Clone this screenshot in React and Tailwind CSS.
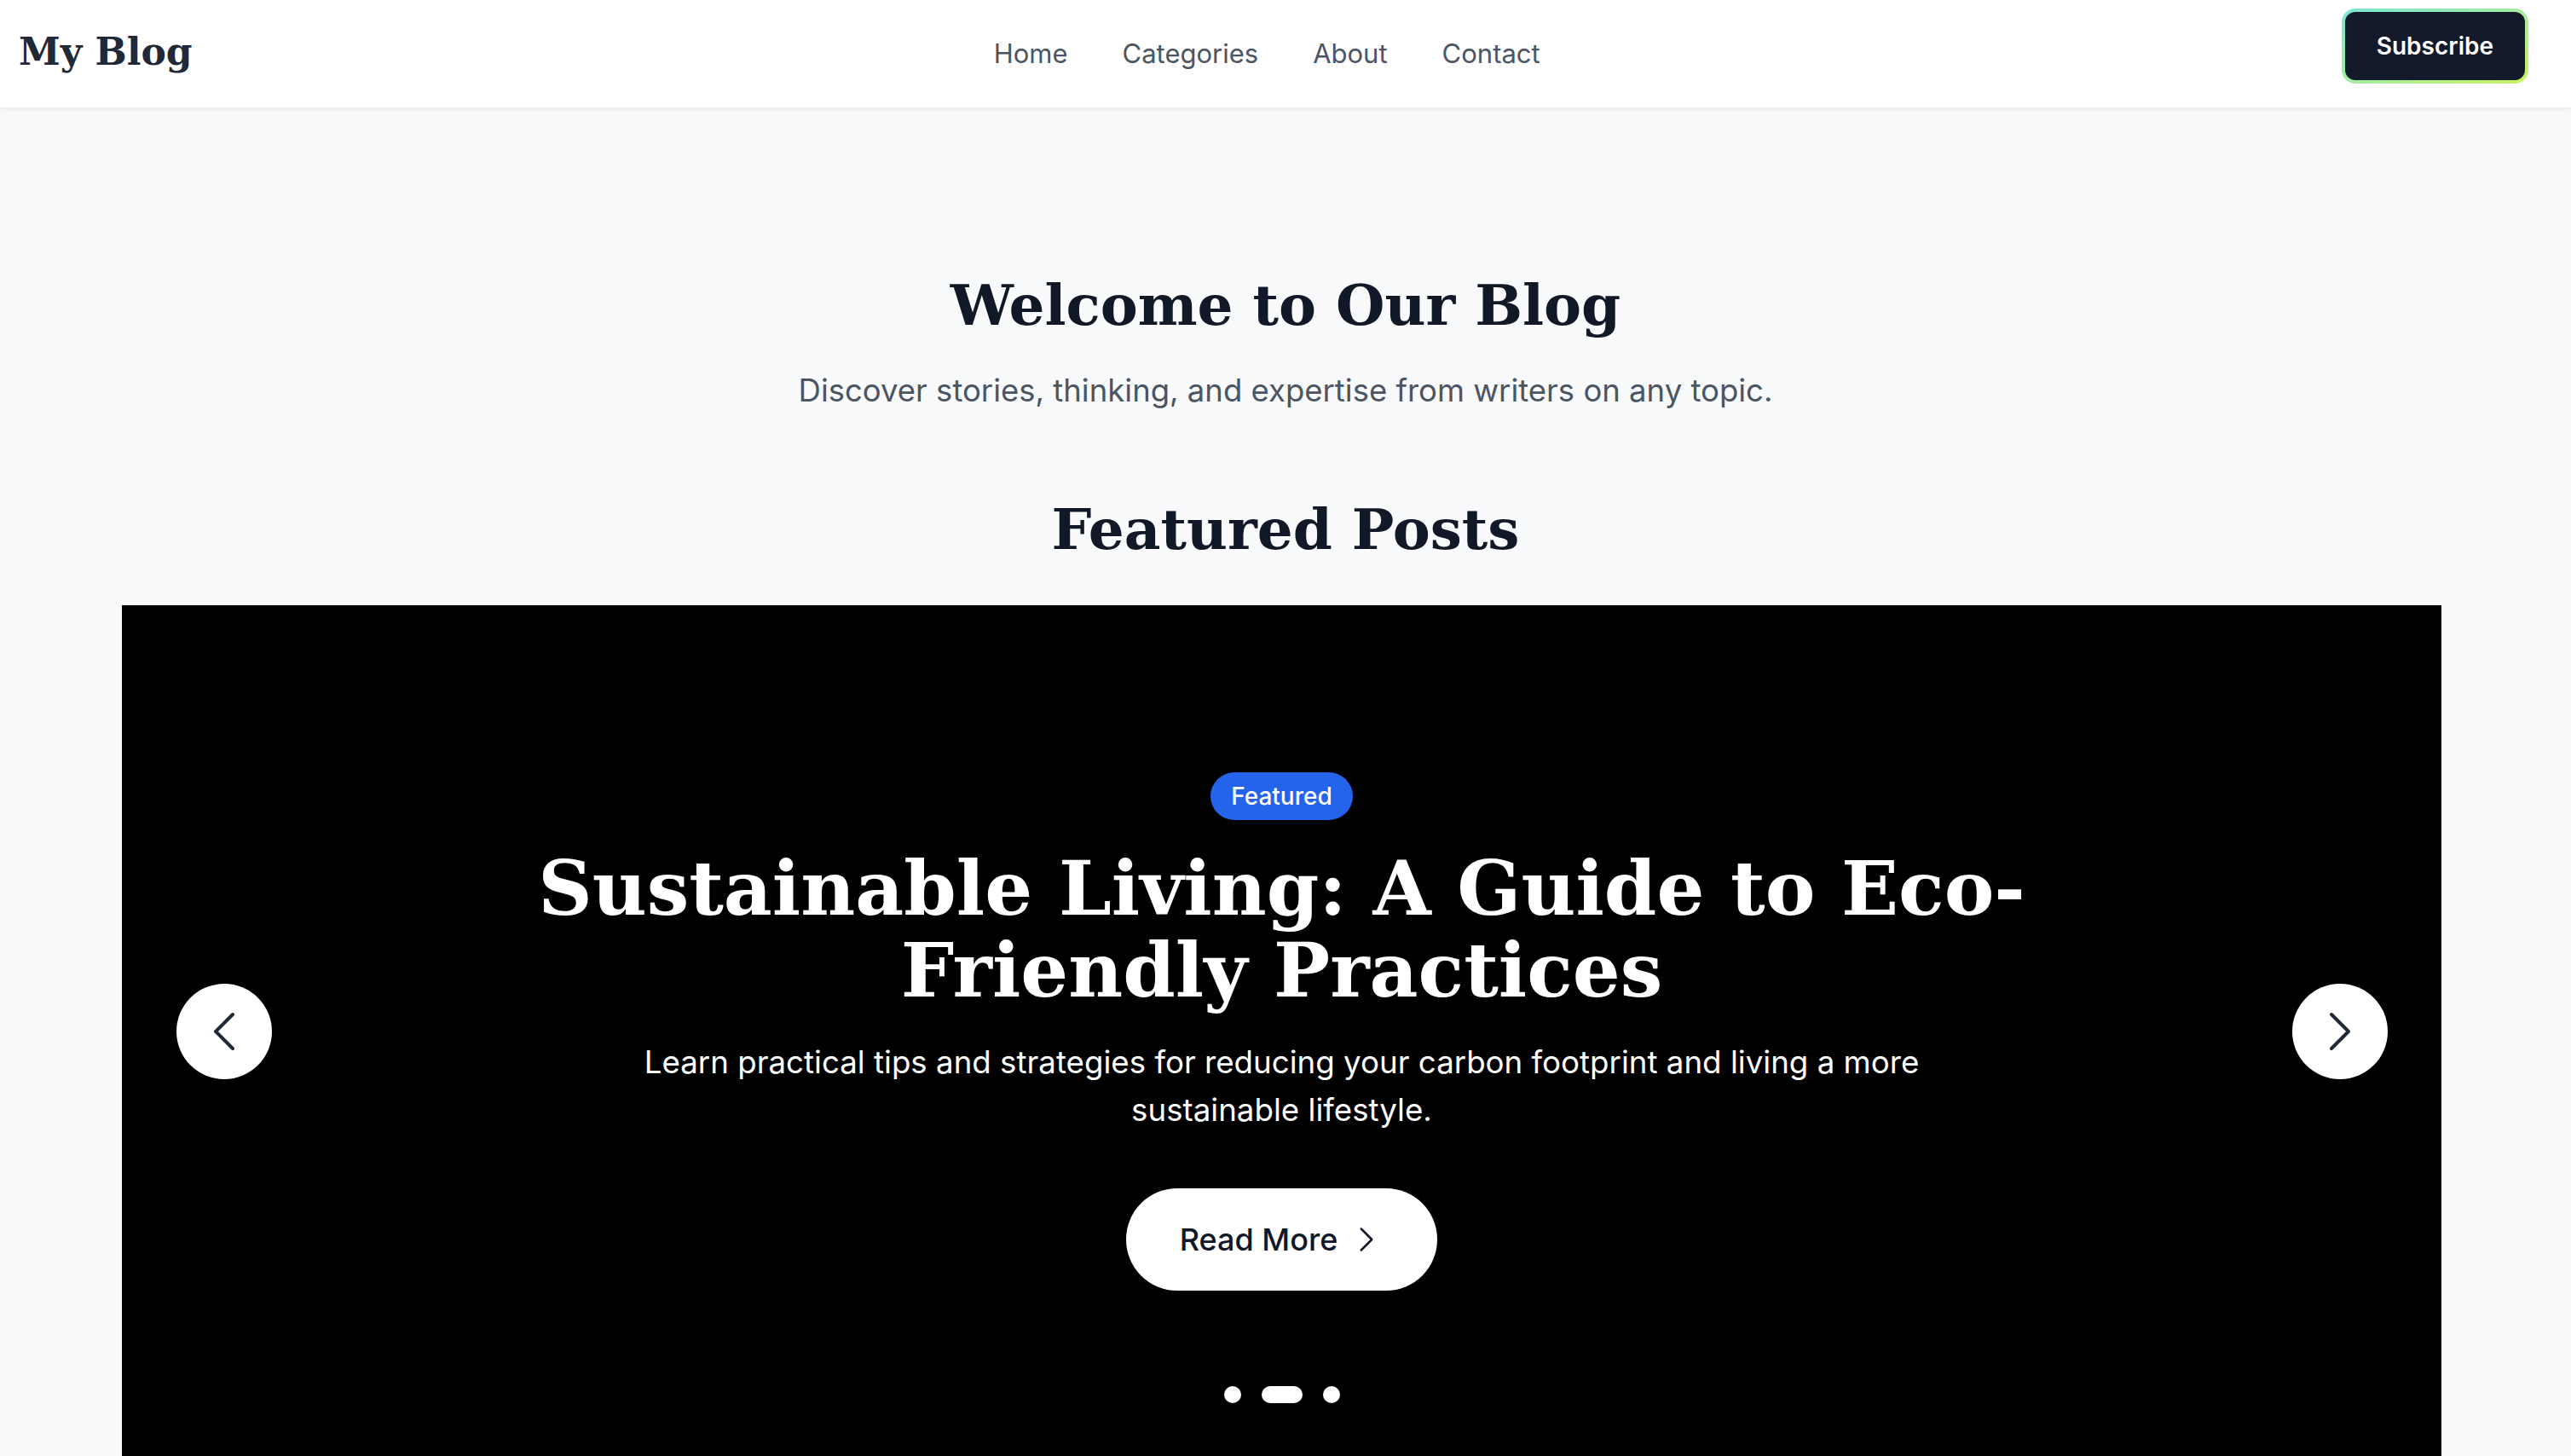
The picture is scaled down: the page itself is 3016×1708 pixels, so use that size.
import React from "react";

const ChevronLeft = ({ className }) => (
    <svg viewBox="0 0 24 24" fill="none" stroke="currentColor" strokeWidth="1.5" className={className}>
        <path strokeLinecap="round" strokeLinejoin="round" d="M15.75 19.5 8.25 12l7.5-7.5" />
    </svg>
);

const ChevronRight = ({ className }) => (
    <svg viewBox="0 0 24 24" fill="none" stroke="currentColor" strokeWidth="1.5" className={className}>
        <path strokeLinecap="round" strokeLinejoin="round" d="m8.25 4.5 7.5 7.5-7.5 7.5" />
    </svg>
);

const links = ["Home", "Categories", "About", "Contact"];

export default function App() {
    return (
        <div className="min-h-screen bg-[#f9fafb] font-['Inter',sans-serif]">
            {/* Header */}
            <header className="relative z-10 h-[126px] bg-white shadow-[0_2px_6px_rgba(0,0,0,0.08)] flex items-center justify-between pl-[22px] pr-[50px]">
                <div className="font-['DejaVu_Serif',serif] text-[44px] font-bold text-[#1f2937] mt-[-4px]">
                    My Blog
                </div>

                <nav className="flex items-center gap-[64px] text-[31px] text-[#4b5563]">
                    {links.map((link) => (
                        <a key={link} href="#">
                            {link}
                        </a>
                    ))}
                </nav>

                <button className="self-start mt-[10px] rounded-[16px] p-[4px] bg-linear-to-br from-[#7ce6d2] to-[#c6f25a]">
                    <span className="flex items-center h-[80px] px-[37px] rounded-[12px] bg-[#131a2b] text-white text-[28px] font-semibold">
                        Subscribe
                    </span>
                </button>
            </header>

            {/* Hero */}
            <section className="pt-[192px] text-center">
                <h1 className="font-['DejaVu_Serif',serif] text-[66px] leading-[80px] font-bold text-[#111827] mb-[32px]">
                    Welcome to Our Blog
                </h1>
                <p className="text-[36.5px] leading-[56px] text-[#4b5563]">
                    Discover stories, thinking, and expertise from writers on any topic.
                </p>
            </section>

            {/* Featured */}
            <section className="mt-[95px]">
                <h2 className="font-['DejaVu_Serif',serif] text-[66px] leading-[80px] font-bold text-[#111827] text-center mb-[49px]">
                    Featured Posts
                </h2>

                <div className="relative ml-[143px] mr-[152px] h-[1000px] bg-black flex items-center justify-center">
                    <div className="flex flex-col items-center text-center">
                        <span className="rounded-full bg-[#2563eb] px-[24px] py-[8px] text-[28px] leading-[40px] font-medium text-white mb-[32px]">
                            Featured
                        </span>
                        <h3 className="max-w-[1792px] font-['DejaVu_Serif',serif] text-[88px] leading-[96px] font-bold text-white mb-[32px]">
                            Sustainable Living: A Guide to Eco-Friendly Practices
                        </h3>
                        <p className="max-w-[1536px] text-[36.7px] leading-[56px] text-white mb-[64px]">
                            Learn practical tips and strategies for reducing your carbon footprint and living a more sustainable lifestyle.
                        </p>
                        <button className="flex items-center rounded-full bg-white px-[63px] py-[32px] text-[36px] leading-[56px] font-medium text-[#111827]">
                            Read More
                            <ChevronRight className="ml-[14px] w-[40px] h-[40px]" />
                        </button>
                    </div>

                    {/* Arrows */}
                    <button className="absolute left-[64px] top-1/2 -translate-y-1/2 w-[112px] h-[112px] rounded-full bg-white flex items-center justify-center text-[#1f2937]">
                        <ChevronLeft className="w-[64px] h-[64px]" />
                    </button>
                    <button className="absolute right-[63px] top-1/2 -translate-y-1/2 w-[112px] h-[112px] rounded-full bg-white flex items-center justify-center text-[#1f2937]">
                        <ChevronRight className="w-[64px] h-[64px]" />
                    </button>

                    {/* Dots */}
                    <div className="absolute bottom-[64px] left-1/2 -translate-x-1/2 flex items-center gap-[24px]">
                        <span className="w-[20px] h-[20px] rounded-full bg-white" />
                        <span className="w-[48px] h-[20px] rounded-full bg-white" />
                        <span className="w-[20px] h-[20px] rounded-full bg-white" />
                    </div>
                </div>
            </section>
        </div>
    );
}
